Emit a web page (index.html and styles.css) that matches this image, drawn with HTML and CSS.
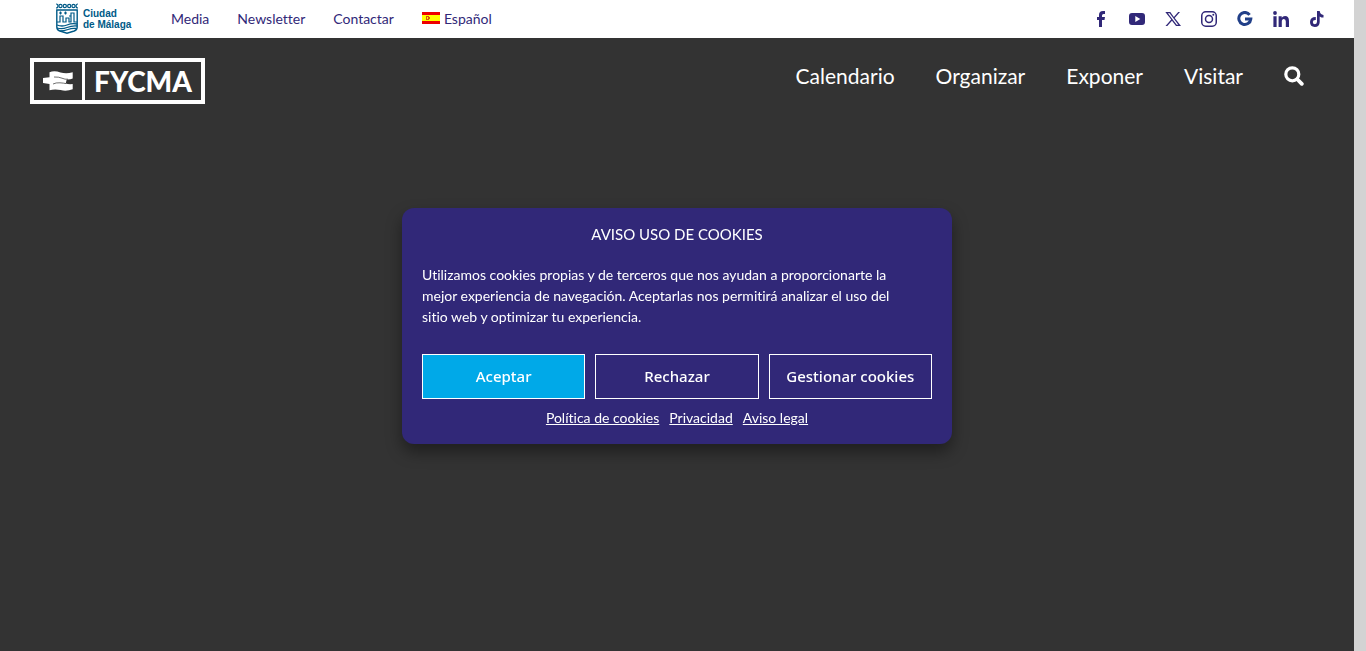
FILE: index.html
```
<!DOCTYPE html>
<html lang="es">
  <head>
    <meta charset="UTF-8" />
    <meta name="viewport" content="width=device-width, initial-scale=1" />
    <title>FYCMA</title>
    <link rel="stylesheet" href="styles.css">
  </head>
  <body>
    <div class="page">
      <div class="topbar">
        <a class="city" href="#" aria-label="Ciudad de Málaga">
          <svg class="shield" viewBox="0 0 22 31" fill="none" stroke="#005a87">
            <g stroke-width="1.2">
              <path d="M0 1Q2 1 2 3T0 5M22 1Q20 1 20 3T22 5" />
              <circle cx="4.500" cy="3" r="1.600" />
              <circle cx="8.800" cy="3" r="1.600" />
              <circle cx="13.200" cy="3" r="1.600" />
              <circle cx="17.500" cy="3" r="1.600" />
            </g>
            <path stroke-width="1.400" d="M.8 7h20.400v17q0 3-3 4l-7.200 2.200L3.800 28q-3-1-3-4z" />
            <path stroke-width="1.200" d="M1 19h3v-6h3v6h3v-4h3v4h2v-9h3v9h3M3 10h3M4.500 8.500v3M8 10h3M9.500 8.500v3M13 13h2" />
            <path stroke-width="1.300" d="M1 22q5 2 10 0t10-1M1 25q5 1.500 10-.5t10-1.500M4 28q4 0 8-1.500t8-1" />
          </svg>
          <span>Ciudad<br>de Málaga</span>
        </a>
        <nav class="topnav">
          <a href="#">Media</a>
          <a href="#">Newsletter</a>
          <a href="#">Contactar</a>
          <a class="lang" href="#">
            <svg class="flag" viewBox="0 0 18 12">
              <path fill="#e00" d="M0 0h18v12H0z" />
              <path fill="#ff0" d="M0 3h18v6H0z" />
              <path fill="#d9570c" d="M4 4h1v4H4zM5 4h2v1H5zM6 5h2v2H6zM5 7h2v1H5z" />
            </svg>
            Español
          </a>
        </nav>
        <div class="social">
          <a href="#" aria-label="Facebook">
            <svg viewBox="0 0 16 16"><path d="M6 16V9H4V6h2V4q0-4 4-4h2v3h-1.500Q9 3 9 4.500V6h3l-.5 3H9v7z" /></svg>
          </a>
          <a href="#" aria-label="YouTube">
            <svg viewBox="0 0 16 16"><path fill-rule="evenodd" d="M3 2h10q3 0 3 3v6q0 3-3 3H3q-3 0-3-3V5q0-3 3-3zm3.300 3v6l5-3z" /></svg>
          </a>
          <a href="#" aria-label="X">
            <svg viewBox="0 0 16 16"><path fill-rule="evenodd" d="M.3 1h5l3.600 4.900L13.200 1H15L9.700 7.100 16 15h-5L7 9.700 2.300 15H.5l5.700-6.500zm2.600 1.300L11.700 13.700h1.600L4.600 2.300z" /></svg>
          </a>
          <a href="#" aria-label="Instagram">
            <svg viewBox="0 0 16 16">
              <g fill="none" stroke="currentColor" stroke-width="1.500">
                <rect x=".75" y=".75" width="14.500" height="14.500" rx="4" />
                <circle cx="8" cy="8" r="3.500" />
              </g>
              <circle cx="12.300" cy="3.700" r="1" />
            </svg>
          </a>
          <a class="google" href="#" aria-label="Google">
            <svg viewBox="0 0 16 16"><path fill="none" stroke="currentColor" stroke-width="3" d="M12.600 3.800A6 6 0 1 0 13.800 8H8" /></svg>
          </a>
          <a href="#" aria-label="LinkedIn">
            <svg viewBox="0 0 16 16"><circle cx="2" cy="2" r="1.900" /><path d="M.4 5.300h3.200V16H.4zM5.600 5.300h3.100v1.500Q9.700 5 12 5q4 0 4 5v6h-3.200v-5.400q0-2.700-1.900-2.700-2.100 0-2.100 2.800V16H5.600z" /></svg>
          </a>
          <a href="#" aria-label="TikTok">
            <svg viewBox="0 0 16 16"><path d="M8 0h2.700q.3 3.500 3.800 3.900v2.700q-2.200 0-3.800-1.200v5.500Q10.500 16 5.800 16 1 15.800 1 11q.3-5 5.800-4.900V9Q3.900 8.700 3.800 11q.1 2.200 2.100 2.200Q8 13.100 8 10.700z" /></svg>
          </a>
        </div>
      </div>

      <header class="header">
        <a class="brand" href="#" aria-label="FYCMA">
          <span class="brand-mark">
            <svg viewBox="0 0 30 20" fill="#fff">
              <path d="M6.500 1.200q5-1.800 11 .3 6 1.800 12.200-.3v6.300q-2.500 1.200-6 1l-1 4q3 1 7 .5v5.300q-6 2.200-12 .8t-11.200.2V13L0 12V7l6.500-.8z" />
              <path fill="none" stroke="#333" stroke-width=".7" d="M11 6q5-.2 8 1.200t6 1M10 13q3-1.500 7-1.200t6 .8" />
            </svg>
          </span>
          <span class="brand-name">FYCMA</span>
        </a>
        <nav class="mainnav">
          <a href="#">Calendario</a>
          <a href="#">Organizar</a>
          <a href="#">Exponer</a>
          <a href="#">Visitar</a>
          <button class="search" type="button" aria-label="Buscar">
            <svg viewBox="0 0 20 20" fill="none" stroke="#fff">
              <circle cx="8.300" cy="8.300" r="6.500" stroke-width="3.200" />
              <path stroke-width="3.800" stroke-linecap="round" d="M13.500 13.500l4.300 4.300" />
            </svg>
          </button>
        </nav>
      </header>

      <div class="cookies" role="dialog" aria-labelledby="cookies-title">
        <h2 id="cookies-title">AVISO USO DE COOKIES</h2>
        <p>Utilizamos cookies propias y de terceros que nos ayudan a proporcionarte la mejor experiencia de navegación. Aceptarlas nos permitirá analizar el uso del sitio web y optimizar tu experiencia.</p>
        <div class="buttons">
          <button class="accept" type="button">Aceptar</button>
          <button type="button">Rechazar</button>
          <button type="button">Gestionar cookies</button>
        </div>
        <div class="links">
          <a href="#">Política de cookies</a>
          <a href="#">Privacidad</a>
          <a href="#">Aviso legal</a>
        </div>
      </div>
    </div>
  </body>
</html>
```

FILE: styles.css
```
* {
  box-sizing: border-box;
}
body {
  margin: 0;
  padding-right: 12px;
  background: #d3d3d3;
  font-family: Lato, "Open Sans", sans-serif;
  font-variant-ligatures: none;
}
a {
  color: inherit;
  text-decoration: none;
}
svg {
  display: block;
}
.page {
  min-height: 100vh;
  background: #333;
  display: grid;
  grid-template-rows: auto auto 1fr;
}

/* top bar */
.topbar {
  display: flex;
  align-items: center;
  height: 38px;
  padding: 0 29px 0 56px;
  background: #fff;
  color: #312878;
  font-size: 14px;
}
.city {
  display: flex;
  align-items: center;
  gap: 5px;
  width: 115px;
  padding-bottom: 1px;
  color: #005a87;
  font: bold 10px/11px "Liberation Sans", Arial, sans-serif;
  white-space: nowrap;
}
.shield {
  width: 22px;
  height: 31px;
}
.topnav {
  display: flex;
  gap: 28px;
  padding-bottom: 2px;
}
.lang {
  display: flex;
  align-items: center;
  gap: 4px;
}
.flag {
  width: 18px;
  height: 12px;
}
.social {
  display: flex;
  gap: 20px;
  margin-left: auto;
}
.social svg {
  width: 16px;
  height: 16px;
  fill: currentColor;
}
.google {
  color: #213f88;
}

/* header */
.header {
  display: flex;
  justify-content: space-between;
  align-items: flex-start;
  padding: 20px 50px 20px 30px;
  color: #fff;
}
.brand {
  display: flex;
  width: 175px;
  height: 46px;
  border: 4px solid #fff;
}
.brand-mark {
  display: flex;
  align-items: center;
  justify-content: center;
  width: 51px;
  border-right: 3px solid #fff;
}
.brand-mark svg {
  width: 30px;
  height: 20px;
}
.brand-name {
  flex: 1;
  text-align: center;
  font-size: 28px;
  font-weight: 900;
  line-height: 38px;
}
.mainnav {
  display: flex;
  align-items: center;
  gap: 41px;
  font-size: 21px;
  line-height: 35px;
}
.search {
  padding: 0;
  border: 0;
  background: none;
  cursor: pointer;
}
.search svg {
  width: 20px;
  height: 20px;
}

/* cookie notice, centred over the page */
.cookies {
  position: fixed;
  top: 50%;
  left: calc(50% - 6px);
  transform: translate(-50%, -50%);
  width: 550px;
  max-width: 90%;
  padding: 15px 20px;
  border-radius: 12px;
  background: #312878;
  box-shadow: 0 8px 16px rgba(0, 0, 0, 0.4);
  color: #fff;
}
.cookies h2 {
  margin: 0 0 19px;
  font-size: 15px;
  font-weight: normal;
  line-height: 22px;
  text-align: center;
}
.cookies p {
  margin: 0 0 27px;
  padding-right: 20px;
  font-size: 14px;
  line-height: 21px;
}
.buttons {
  display: grid;
  grid-template-columns: repeat(3, 1fr);
  gap: 10px;
}
.buttons button {
  height: 45px;
  padding: 0;
  border: 1px solid #fff;
  background: none;
  color: #fff;
  font: 500 15px "Noto Sans", sans-serif;
  cursor: pointer;
}
.buttons .accept {
  background: #00a9e8;
}
.links {
  display: flex;
  justify-content: center;
  gap: 10px;
  margin: 8px 0 1px;
  font-size: 14px;
  line-height: 21px;
}
.links a {
  text-decoration: underline;
}
```
